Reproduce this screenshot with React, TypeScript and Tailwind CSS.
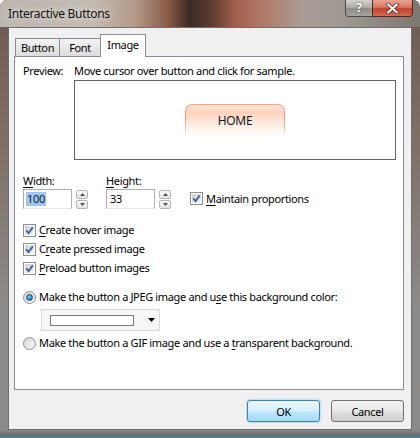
import React from "react";

const F = "font-['Noto_Sans',sans-serif] text-[11px] tracking-[-0.35px]";

function Check() {
  return (
    <span className="w-[13px] h-[13px] border border-[#8e8f8f] bg-white flex items-center justify-center shrink-0">
      <span className="w-[9px] h-[9px] bg-gradient-to-br from-[#c9ccd3] to-[#f7f7f7] flex items-center justify-center">
        <svg width="9" height="9" viewBox="0 0 9 9">
          <path d="M1.2 4.4 L3.6 7 L7.8 1.4" fill="none" stroke="#3f5b9a" strokeWidth="1.8" />
        </svg>
      </span>
    </span>
  );
}

function Radio({ on }: { on?: boolean }) {
  return (
    <span className="w-[13px] h-[13px] rounded-full border border-[#8e8f8f] bg-gradient-to-br from-[#d5d5d5] to-[#fbfbfb] flex items-center justify-center shrink-0">
      {on && (
        <span className="w-[7px] h-[7px] rounded-full border border-[#1c4c78] bg-[radial-gradient(circle_at_40%_40%,#8fd0f7,#2a8ad0_55%,#0f4f84)]" />
      )}
    </span>
  );
}

function Spin() {
  return (
    <div className="flex flex-col gap-[1px] w-[12px] h-[19px]">
      <div className="flex-1 border border-[#b5b5b5] rounded-[2px] bg-gradient-to-b from-[#f7f7f7] to-[#e3e3e3] flex items-center justify-center">
        <svg width="5" height="3" viewBox="0 0 5 3"><path d="M0 3 L2.5 0 L5 3 Z" fill="#4f4f4f" /></svg>
      </div>
      <div className="flex-1 border border-[#b5b5b5] rounded-[2px] bg-gradient-to-b from-[#f7f7f7] to-[#e3e3e3] flex items-center justify-center">
        <svg width="5" height="3" viewBox="0 0 5 3"><path d="M0 0 L5 0 L2.5 3 Z" fill="#4f4f4f" /></svg>
      </div>
    </div>
  );
}

const U = "underline underline-offset-[2px]";

export default function App() {
  return (
    <div className={`${F} w-[420px] h-[438px] flex flex-col rounded-t-[7px] overflow-hidden bg-[linear-gradient(180deg,#6b5a50_0%,#7d6e66_30%,#8c8a88_70%,#8a8a8a_100%)] text-black`}>
      {/* Title bar */}
      <div className="h-[27px] shrink-0 flex items-start bg-[linear-gradient(90deg,#bdb7b0_0%,#c3bbb2_22%,#b59a8a_32%,#8a5a48_40%,#3b2b25_45%,#5a3a30_50%,#a0604c_56%,#b07866_62%,#a89c94_72%,#9e9892_82%,#7e7670_100%)]">
        <div className="pl-[8px] pt-[5px] leading-[17px] text-[12px] tracking-[-0.3px] text-[#101010] [text-shadow:0_0_6px_rgba(255,255,255,0.9)]">
          Interactive Buttons
        </div>
        <div className="ml-auto mr-[7px] flex">
          <div className="w-[27px] h-[17px] rounded-bl-[4px] border border-t-0 border-r-0 border-[#4a4a4a] bg-[linear-gradient(180deg,#d4d0cc_0%,#b2aeaa_45%,#8e8a86_55%,#a9a5a1_100%)] flex items-center justify-center text-white font-bold text-[12px] leading-none [text-shadow:0_0_2px_#333]">
            ?
          </div>
          <div className="w-[41px] h-[17px] rounded-br-[4px] border border-t-0 border-[#4a2a22] bg-[linear-gradient(180deg,#e9a391_0%,#d77560_45%,#c2402a_55%,#d96a4c_100%)] flex items-center justify-center">
            <svg width="13" height="11" viewBox="0 0 13 11">
              <path d="M2 1.5 L11 9.5 M11 1.5 L2 9.5" stroke="#5a2018" strokeWidth="3.6" strokeLinecap="round" />
              <path d="M2 1.5 L11 9.5 M11 1.5 L2 9.5" stroke="#ffffff" strokeWidth="2.2" strokeLinecap="round" />
            </svg>
          </div>
        </div>
      </div>
      {/* Body */}
      <div className="flex-1 flex px-[8px]">
        <div className="flex-1 flex flex-col bg-[#f0f0f0] border border-[#6e6e6e]">
          <div className="flex flex-col ml-[5px] mr-[7px] mt-[6px]">
            {/* tabs */}
            <div className="flex items-end h-[22px] pl-[1px] relative z-10">
              <div className="w-[44px] h-[18px] border border-r-0 border-b-0 border-[#898c95] bg-gradient-to-b from-[#f3f3f3] to-[#dcdcdc] flex items-center justify-center leading-[16px]">
                Button
              </div>
              <div className="w-[41px] h-[18px] border border-b-0 border-r-0 border-[#898c95] bg-gradient-to-b from-[#f3f3f3] to-[#dcdcdc] flex items-center justify-center leading-[16px]">
                Font
              </div>
              <div className="w-[46px] h-[23px] -mb-[1px] border border-b-0 border-[#898c95] bg-white flex items-start justify-center pt-[2px] leading-[16px]">
                Image
              </div>
            </div>
            {/* panel */}
            <div className="h-[334px] border border-[#898c95] bg-white flex flex-col pl-[8px]">
              <div className="flex pt-[6px]">
                <div className="w-[51px] leading-[15px]">Preview:</div>
                <div className="flex flex-col">
                  <div className="leading-[15px]">Move cursor over button and click for sample.</div>
                  <div className="mt-[2px] w-[322px] h-[80px] border border-[#646464] bg-white flex items-center justify-center">
                    <div className="w-[100px] h-[33px] rounded-t-[7px] pt-[1px] px-[1px] bg-[linear-gradient(180deg,#f0a88a_0%,#e6936f_40%,rgba(240,160,130,0.6)_75%,rgba(255,255,255,0)_100%)]">
                      <div className="w-full h-full rounded-t-[6px] bg-[linear-gradient(180deg,#fde4d6_0%,#fcd3be_25%,#fee9dd_55%,#ffffff_100%)] flex items-center justify-center text-[#141428] text-[12px] leading-none">
                        HOME
                      </div>
                    </div>
                  </div>
                </div>
              </div>
              {/* size row */}
              <div className="flex items-end mt-[13px]">
                <div className="flex flex-col">
                  <div className="leading-[15px]"><span className={U}>W</span>idth:</div>
                  <div className="flex items-center gap-[4px] mt-[1px]">
                    <div className="w-[49px] h-[20px] border border-[#abadb3] border-b-[#e3e9ef] bg-white flex items-center pl-[2px]">
                      <span className="bg-[#9ec6ee] text-[#0a1a3a] leading-[14px] px-[1px]">100</span>
                    </div>
                    <Spin />
                  </div>
                </div>
                <div className="flex flex-col ml-[18px]">
                  <div className="leading-[15px]"><span className={U}>H</span>eight:</div>
                  <div className="flex items-center gap-[4px] mt-[1px]">
                    <div className="w-[49px] h-[20px] border border-[#abadb3] border-b-[#e3e9ef] bg-white flex items-center pl-[3px]">
                      <span className="leading-[14px]">33</span>
                    </div>
                    <Spin />
                  </div>
                </div>
                <div className="flex items-center gap-[3px] h-[15px] mb-[3px] ml-[19px]">
                  <Check />
                  <span className="leading-[15px]"><span className={U}>M</span>aintain proportions</span>
                </div>
              </div>
              {/* checks */}
              <div className="flex flex-col mt-[12px]">
                <div className="flex items-center gap-[3px] h-[19px]">
                  <Check />
                  <span><span className={U}>C</span>reate hover image</span>
                </div>
                <div className="flex items-center gap-[3px] h-[19px]">
                  <Check />
                  <span>C<span className={U}>r</span>eate pressed image</span>
                </div>
                <div className="flex items-center gap-[3px] h-[19px]">
                  <Check />
                  <span><span className={U}>P</span>reload button images</span>
                </div>
              </div>
              {/* radios */}
              <div className="flex items-center gap-[3px] h-[19px] mt-[10px]">
                <Radio on />
                <span>Make the button a JPEG image and u<span className={U}>s</span>e this background color:</span>
              </div>
              <div className="mt-[2px] ml-[18px] w-[119px] h-[22px] border border-[#d9d9d9] bg-[#f7f7f7] flex items-center">
                <div className="ml-[8px] w-[84px] h-[11px] border border-[#7a7a7a] bg-white" />
                <svg className="ml-[14px]" width="7" height="4" viewBox="0 0 7 4"><path d="M0 0 L7 0 L3.5 4 Z" fill="#000" /></svg>
              </div>
              <div className="flex items-center gap-[3px] h-[19px] mt-[3px]">
                <Radio />
                <span>Make the button a GIF image and use a <span className={U}>t</span>ransparent background.</span>
              </div>
            </div>
            {/* buttons */}
            <div className="flex justify-end gap-[11px] mt-[10px]">
              <div className="w-[73px] h-[22px] rounded-[3px] border border-[#3c7fb1] shadow-[0_0_2px_#5ab4e8] bg-[linear-gradient(180deg,#eaf6fd_0%,#d9f0fc_45%,#bee6fd_55%,#a7d9f5_100%)] flex items-center justify-center leading-none">
                OK
              </div>
              <div className="w-[73px] h-[22px] rounded-[3px] border border-[#707070] bg-[linear-gradient(180deg,#f2f2f2_0%,#ebebeb_45%,#dddddd_55%,#cfcfcf_100%)] flex items-center justify-center leading-none">
                Cancel
              </div>
            </div>
          </div>
        </div>
      </div>
      <div className="h-[8px] shrink-0 bg-[linear-gradient(180deg,#8a8a8a_0%,#6a6a6a_60%,#3f8fa0_100%)]" />
    </div>
  );
}
